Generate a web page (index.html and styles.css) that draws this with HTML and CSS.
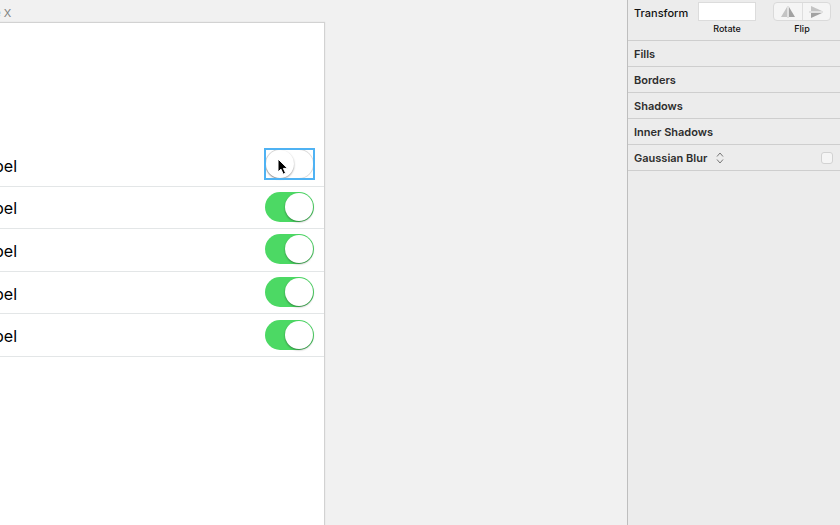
FILE: index.html
```
<!DOCTYPE html>
<html lang="en">
<head>
    <meta charset="UTF-8">
    <meta name="viewport" content="width=device-width, initial-scale=1.0">
    <title>Switches</title>
    <link rel="stylesheet" href="styles.css">
</head>
<body>
    <div class="app">
        <main class="canvas">
            <h1 class="artboard-name">iPhone X</h1>
            <div class="artboard">
                <ul class="rows">
                    <li>
                        <label for="switch1">Label</label>
                        <span class="layer selected">
                            <input type="checkbox" class="switch" id="switch1">
                            <svg class="cursor" width="12" height="18" viewBox="0 0 12 18">
                                <path d="M1 1V14L4 11.2L6.2 16.2L8.6 15.1L6.4 10.4H10.6Z" fill="#000" stroke="#fff" stroke-width="1"/>
                            </svg>
                        </span>
                    </li>
                    <li>
                        <label for="switch2">Label</label>
                        <span class="layer"><input type="checkbox" class="switch" id="switch2" checked></span>
                    </li>
                    <li>
                        <label for="switch3">Label</label>
                        <span class="layer"><input type="checkbox" class="switch" id="switch3" checked></span>
                    </li>
                    <li>
                        <label for="switch4">Label</label>
                        <span class="layer"><input type="checkbox" class="switch" id="switch4" checked></span>
                    </li>
                    <li>
                        <label for="switch5">Label</label>
                        <span class="layer"><input type="checkbox" class="switch" id="switch5" checked></span>
                    </li>
                </ul>
            </div>
        </main>

        <aside class="inspector">
            <div class="transform">
                <span class="title">Transform</span>
                <div class="field">
                    <input type="text" id="rotate">
                    <label for="rotate">Rotate</label>
                </div>
                <div class="field flip">
                    <div class="segmented">
                        <button type="button" aria-label="Flip horizontal">
                            <svg width="14" height="12" viewBox="0 0 14 12">
                                <path d="M6 1V11H0Z" fill="#c4c4c4"/>
                                <path d="M8 1V11H14Z" fill="#a2a2a2"/>
                                <path d="M7 0V12" stroke="#cdcdcd"/>
                            </svg>
                        </button>
                        <button type="button" aria-label="Flip vertical">
                            <svg width="14" height="14" viewBox="0 0 14 14">
                                <path d="M2 1V6H13Z" fill="#c4c4c4"/>
                                <path d="M2 13V8H13Z" fill="#a2a2a2"/>
                                <path d="M0 7H14" stroke="#cdcdcd"/>
                            </svg>
                        </button>
                    </div>
                    <span class="caption">Flip</span>
                </div>
            </div>
            <h2>Fills</h2>
            <h2>Borders</h2>
            <h2>Shadows</h2>
            <h2>Inner Shadows</h2>
            <h2>
                <label for="blur">Gaussian Blur</label>
                <svg width="8" height="12" viewBox="0 0 8 12">
                    <path d="M1 4.5L4 1L7 4.5M1 7.5L4 11L7 7.5" fill="none" stroke="#777"/>
                </svg>
                <input type="checkbox" id="blur">
            </h2>
        </aside>
    </div>
</body>
</html>
```
FILE: styles.css
```
* {
    margin: 0;
    padding: 0;
    box-sizing: border-box;
}

body {
    background: #f1f1f1;
    font-family: Inter, "Liberation Sans", sans-serif;
}

.app {
    display: flex;
    height: 100vh;
    overflow: hidden;
}

/* Canvas */
.canvas {
    flex: 1;
    display: flex;
    flex-direction: column;
    overflow: hidden;
    padding-top: 6px;
}

/* scrolled a little to the right */
.artboard-name,
.artboard {
    margin-left: -36px;
}

.artboard-name {
    height: 17px;
    padding-left: 1px;
    line-height: 14px;
    font-size: 11px;
    font-weight: 400;
    color: #808080;
}

.artboard {
    flex: 1;
    width: 360px;
    padding-top: 121px;
    background: #fff;
    box-shadow: 0 0 1px 1px #d2d2d2;
}

.rows {
    display: grid;
    grid-auto-rows: 1fr;
    height: 213px;
    list-style: none;
}

.rows li {
    display: flex;
    align-items: center;
    justify-content: space-between;
    padding: 0 9px 0 12px;
    border-bottom: 1px solid #e3e6e7;
}

.rows label {
    padding-top: 2px;
    font-size: 16px;
    line-height: 20px;
    color: #000;
}

.layer {
    position: relative;
    display: flex;
    padding: 1px;
    margin-bottom: 1px;
}

.selected {
    outline: 2px solid #4fb2f3;
    outline-offset: -2px;
}

.switch {
    appearance: none;
    display: flex;
    width: 49px;
    height: 30px;
    padding: 1px;
    border-radius: 15px;
    background: #fff;
    box-shadow: inset 0 0 0 1px #dcdcdc;
}

.switch::before {
    content: "";
    width: 28px;
    height: 28px;
    border-radius: 50%;
    background: #fff;
    box-shadow: 0 1px 2px rgba(0, 0, 0, 0.4);
}

.switch:checked {
    justify-content: flex-end;
    background: #4cd964;
    box-shadow: none;
}

.cursor {
    position: absolute;
    left: 13px;
    top: 10px;
}

/* Inspector */
.inspector {
    width: 213px;
    background: #ececec;
    border-left: 1px solid #bebebe;
    color: #2e2e2e;
}

.transform {
    display: flex;
    align-items: flex-start;
    height: 41px;
    padding: 2px 9px 0 6px;
    border-bottom: 1px solid #cecece;
    color: #111;
}

.title {
    width: 64px;
    font-size: 11px;
    font-weight: 500;
    line-height: 22px;
}

.field {
    display: flex;
    flex-direction: column;
    align-items: center;
    width: 58px;
    font-size: 9px;
    font-weight: 500;
    line-height: 15px;
}

.field input {
    width: 58px;
    height: 19px;
    border: 1px solid #dcdcdc;
    background: #fff;
}

.flip {
    margin-left: auto;
}

.segmented {
    display: flex;
    width: 58px;
    height: 19px;
    border: 1px solid #dadada;
    border-radius: 4px;
    background: #f5f5f5;
}

.segmented button {
    flex: 1;
    display: flex;
    align-items: center;
    justify-content: center;
    border: none;
    background: none;
}

.segmented button + button {
    border-left: 1px solid #dedede;
}

.inspector h2 {
    display: flex;
    align-items: center;
    height: 26px;
    padding: 0 7px 0 6px;
    border-bottom: 1px solid #cecece;
    font-size: 11px;
    line-height: 14px;
    font-weight: 600;
}

.inspector h2 svg {
    margin-left: 9px;
}

.inspector h2 input {
    appearance: none;
    width: 12px;
    height: 12px;
    margin-left: auto;
    border: 1px solid #d2d2d2;
    border-radius: 3px;
    background: #f5f5f5;
}
```
